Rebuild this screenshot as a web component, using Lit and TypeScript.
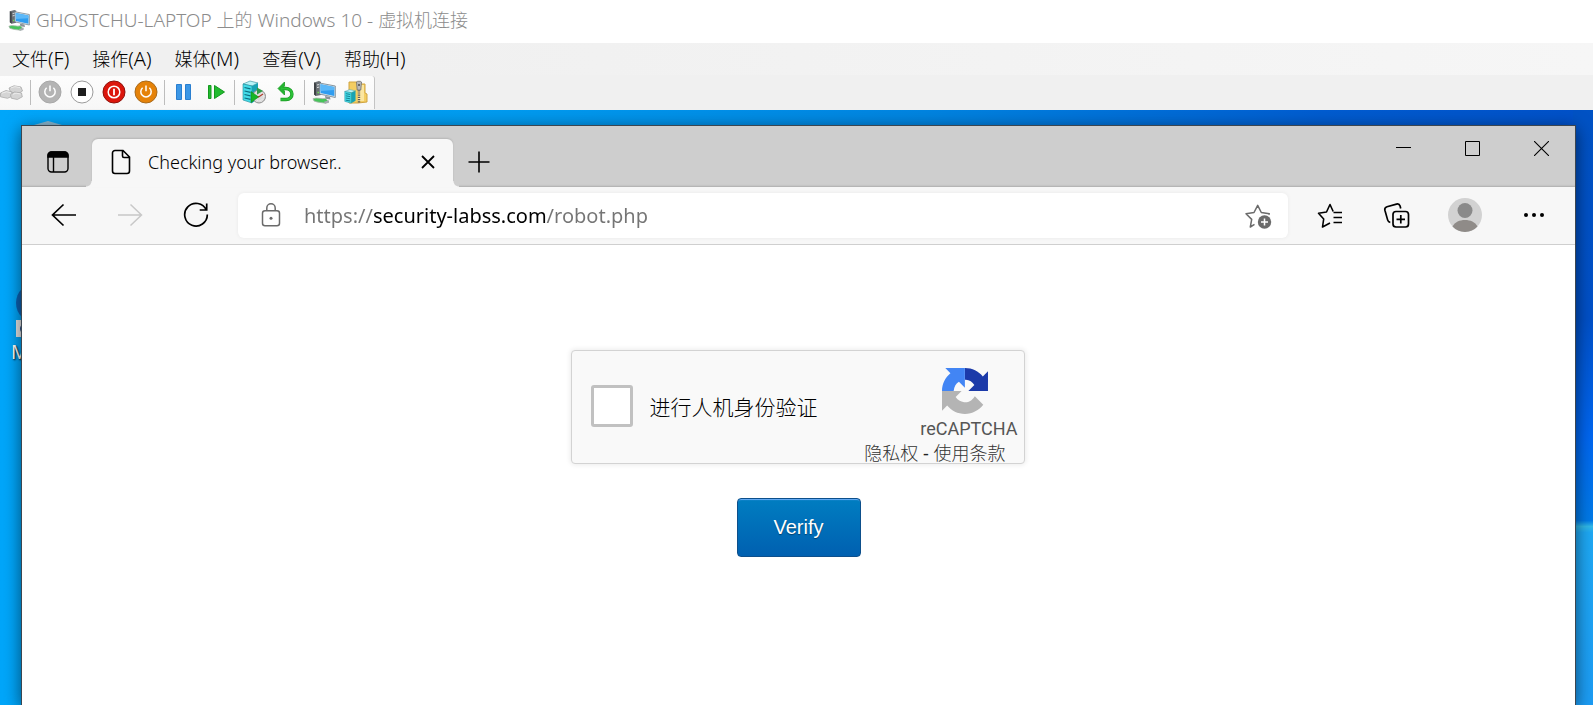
import { LitElement, html, css, svg } from "lit";
import { customElement } from "lit/decorators.js";

const ring = (fill: string, edge: string, glyph: unknown) => html`
  <svg width="24" height="24" viewBox="0 0 24 24" fill="none">
    <circle cx="12" cy="12" r="11" fill=${fill} stroke=${edge} />
    ${glyph}
  </svg>`;

const power = svg`<path d="M8.6 7.8a5.2 5.2 0 1 0 6.8 0M12 5.4v5.8" stroke="#fff" stroke-width="1.5"/>`;

const computer = (size: number) => html`
  <svg width=${size} height=${size} viewBox="0 0 24 24">
    <path d="M2 2.5 7 1l2 1v13l-5 1-2-1.500z" fill="#6b7075" />
    <path d="M2 2.500 4 3.500V16l-2-1.500z" fill="#3f4346" />
    <path d="M5 5l3-.6M5 7.500l3-.6" stroke="#dfe3e6" />
    <path d="M5.500 12.500h1.600" stroke="#6ce04a" stroke-width="1.500" />
    <path d="M7.500 3 23.300 6v11.500L7.500 14z" fill="#dfe6ea" stroke="#6d7f8c" stroke-width=".8" />
    <path d="M8.500 4.300 22.300 7v9L8.500 13z" fill="#2f9df0" />
    <path d="M8.500 4.300 22.300 7v3L8.500 11z" fill="#5cb8f8" />
    <path d="M13 16l5 1 .5 2.500-5-.8z" fill="#8b9298" />
    <path d="M1 18.700c4-1.800 8 .8 12.500-.3l3 3.200-3 1.600C9 22.500 6 22.500 2 21z" fill="#46c45a" stroke="#a9b3ab" stroke-width=".8" />
    <path d="M12 21.800l5-1.500v2.500l-4 1z" fill="#a6acb0" />
  </svg>`;

const server = svg`
  <path d="M1 4 8 1l8 2-6 3z" fill="#b9f3f7" stroke="#2b8c99" stroke-width=".6"/>
  <path d="M1 4l9 2v17l-9-3z" fill="#43dbe8" stroke="#1f8795" stroke-width=".6"/>
  <path d="M10 6l6-3v16l-6 4z" fill="#17a3b4"/>
  <path d="M2.500 7.500l6 1.300M2.500 11l6 1.300M2.500 14.500l6 1.300M2.500 18l6 1.300" stroke="#0c6e80" stroke-width="1.200"/>`;

@customElement("vm-toolbar")
export class VmToolbar extends LitElement {
  static styles = css`
    :host { display: flex; height: 35px; background: #f0f0f0; }
    .strip {
      display: flex; align-items: center; height: 33px; margin-top: 1px; padding-right: 2px;
      background: linear-gradient(#fdfdfd, #f7f7f7);
      border-right: 1px solid #c4c4c4; border-radius: 0 3px 0 0;
    }
    button {
      display: grid; place-items: center; width: 32px; height: 32px;
      padding: 0 0 2px; border: 0; background: none; box-sizing: border-box;
    }
    .first { width: 28px; padding-right: 4px; }
    .sep { width: 1px; height: 25px; margin: 0 3px 0 2px; background: #bdbdbd; }
  `;

  render() {
    return html`
      <div class="strip" role="toolbar" aria-label="工具栏">
        <button class="first" aria-label="Ctrl+Alt+Del">
          <svg width="24" height="24" viewBox="0 0 24 24" fill="#d4d4d4" stroke="#a9a9a9" stroke-width=".8">
            <path d="M9 8l5-2.200 7 1.200 1.500 4-4 2.500-8-1.500z" />
            <path d="M.5 13 6 10.500l6 1.500.5 4-5 2.300-7-1.500z" />
            <path d="M10.500 14.500l4-2.500 7 1 .8 3.800-5 2.700-6-1.300z" />
            <path d="M11 7.800l4-1.200 5 1M2 13.200l4.500-1.500 4.500 1M13 14.300l3-1.200 4.500.9" stroke="#f2f2f2" fill="none" />
          </svg>
        </button>
        <span class="sep"></span>
        <button aria-label="启动">${ring("#b4b4b4", "#a8a8a8", power)}</button>
        <button aria-label="强行关闭">
          ${ring("#fff", "#9b9b9b", svg`<path d="M8 8h8v8H8z" fill="#1e1e1e"/>`)}
        </button>
        <button aria-label="关闭">
          ${ring("#dc160c", "#8e120c", svg`<circle cx="12" cy="12" r="5.800" stroke="#fff" stroke-width="1.500"/><path d="M12 8.800v6.400" stroke="#fff" stroke-width="1.800"/>`)}
        </button>
        <button aria-label="保存">${ring("#e58209", "#a86a1c", power)}</button>
        <span class="sep"></span>
        <button aria-label="暂停">
          <svg width="24" height="24" viewBox="0 0 24 24" fill="#3c97e6" stroke="#2a7fd0">
            <path d="M4.500 4.500h5v15h-5zM13.500 4.500h5v15h-5z" />
          </svg>
        </button>
        <button aria-label="重置">
          <svg width="24" height="24" viewBox="0 0 24 24" fill="#22bb2f" stroke="#14981f">
            <path d="M4.500 5.500h2.500v13H4.500zM10.500 5.500v13L20.500 12z" />
          </svg>
        </button>
        <span class="sep"></span>
        <button aria-label="检查点">
          <svg width="24" height="24" viewBox="0 0 24 24">
            ${server}
            <circle cx="17" cy="16.500" r="6.500" fill="#dcdcdc" stroke="#8d8d8d" />
            <circle cx="17" cy="16.500" r="4.300" fill="none" stroke="#f7f7f7" stroke-dasharray="1 1.500" />
            <path d="M13 17.500l4-.8 4-2.700" fill="none" stroke="#b03a2a" stroke-width="1.200" />
            <path d="M15 7.500v7l6-3.500z" fill="#2f9c46" />
            <path d="M9 11.500v11l7.500-5.500z" fill="#18b625" stroke="#0c8a18" stroke-width=".6" />
          </svg>
        </button>
        <button aria-label="还原">
          <svg width="24" height="24" viewBox="0 0 24 24" fill="none">
            <path d="M7 8.500h4.500C20 8.500 20 19.500 12 19.500H6.500" stroke="#189a22" stroke-width="3.400" />
            <path d="M10.500 2v4L8 8.500l2.500 2.500v4L4 8.500z" fill="#22b52f" stroke="#189a22" stroke-width=".8" />
            <path d="M7 8.500h4.500C20 8.500 20 19.500 12 19.500H7" stroke="#2cc038" stroke-width="2.200" />
          </svg>
        </button>
        <span class="sep"></span>
        <button aria-label="增强会话">${computer(24)}</button>
        <button aria-label="共享">
          <svg width="24" height="24" viewBox="0 0 24 24">
            <path d="M5 2h8l2 2h6v9l2 1v8l-9 1H5z" fill="#f3cd62" stroke="#d0a441" />
            <path d="M14 5h6v16h-6z" fill="#fbe6a0" />
            <path d="M15 8v15" stroke="#5c5c5c" stroke-width="2.400" stroke-dasharray="1.200 1" />
            <path d="M12.500 2c0-1 5-1 5 0l-.7 8h-3.600z" fill="#b9b9b9" stroke="#6f6f6f" stroke-width=".8" />
            <path d="M15 4v2" stroke="#444" stroke-width="1.400" />
            <g transform="translate(0 9) scale(.72 .62)">${server}</g>
          </svg>
        </button>
      </div>`;
  }
}

@customElement("captcha-box")
export class CaptchaBox extends LitElement {
  static styles = css`
    :host {
      display: flex; box-sizing: border-box; width: 454px; height: 114px; max-width: 100%;
      border: 1px solid #d3d3d3; border-radius: 4px; background: #f9f9f9;
      box-shadow: 0 0 5px 1px rgba(0, 0, 0, 0.08);
      font-family: Roboto, "Noto Sans CJK SC", sans-serif; color: #555;
    }
    .check {
      display: flex; align-items: center; flex: 1; gap: 17px;
      padding: 0 0 3px 19px; font-size: 21px; font-weight: 300; color: #000;
    }
    input {
      appearance: none; box-sizing: border-box; width: 42px; height: 42px; margin: 0;
      border: 3px solid #c1c1c1; border-radius: 3px; background: #fff;
    }
    .brand { display: flex; flex-direction: column; align-items: flex-end; padding: 17px 6px 0 0; }
    .logo { flex-shrink: 0; margin-right: 30px; }
    .name { margin-top: 3px; font-size: 18px; line-height: 24px; }
    .links { padding-right: 12px; font-size: 18px; line-height: 24px; font-weight: 300; }
    .dash { font-family: "Noto Sans", sans-serif; font-weight: 400; color: #222; }
    a { color: #333; text-decoration: none; }
  `;

  render() {
    return html`
      <label class="check"><input type="checkbox" />进行人机身份验证</label>
      <div class="brand">
        <svg class="logo" width="46" height="46" viewBox="0 0 64 64" aria-hidden="true">
          <svg x="32" y="0" width="32" height="32" viewBox="32 0 32 32">
            <path fill="#1c3aa9" d="M64 31.955l-.033-1.370V4.687l-7.160 7.160C50.948 4.674 42.033.093 32.050.093c-10.400 0-19.622 4.960-25.458 12.640l11.736 11.860a15.550 15.550 0 0 1 4.754-5.334c2.050-1.600 4.952-2.906 8.968-2.906.485 0 .860.057 1.135.163 4.976.393 9.288 3.140 11.828 7.124l-8.307 8.307L64 31.953" />
          </svg>
          <svg x="0" y="0" width="32" height="32" viewBox="0 0 32 32">
            <path fill="#4285f4" d="M31.862.094l-1.370.033H4.594l7.160 7.160C4.580 13.147 0 22.060 0 32.046c0 10.400 4.960 19.622 12.640 25.458L24.500 45.768a15.550 15.550 0 0 1-5.334-4.754c-1.600-2.050-2.906-4.952-2.906-8.968 0-.485.057-.860.163-1.135.393-4.976 3.140-9.288 7.124-11.828l8.307 8.307L31.860.095" />
          </svg>
          <path fill="#b4b4b4" d="M.001 32.045l.033 1.370v25.898l7.160-7.160c5.860 7.173 14.774 11.754 24.760 11.754 10.400 0 19.622-4.960 25.458-12.640L45.676 39.407a15.550 15.550 0 0 1-4.754 5.334c-2.050 1.600-4.952 2.906-8.968 2.906-.485 0-.860-.057-1.135-.163-4.976-.393-9.288-3.140-11.828-7.124l8.307-8.307-27.300.020" />
        </svg>
        <div class="name">reCAPTCHA</div>
        <div class="links"><a href="#privacy">隐私权</a><span class="dash"> - </span><a href="#terms">使用条款</a></div>
      </div>`;
  }
}

@customElement("browser-window")
export class BrowserWindow extends LitElement {
  static styles = css`
    :host {
      display: flex; flex-direction: column; flex: 1; min-width: 0;
      position: relative; background: #fff;
      border: 1px solid #3c4650; border-bottom: 0;
      box-shadow: 0 4px 16px rgba(0, 0, 0, 0.55);
      font-family: "Noto Sans", "Open Sans", sans-serif;
    }
    button { display: grid; place-items: center; padding: 0; border: 0; background: none; color: #000; }
    svg { display: block; fill: none; stroke: currentColor; }
    .flat { stroke: none; }
    .quiet { color: #6b6b6b; }
    .tabs { display: flex; height: 61px; background: #cecece; box-shadow: inset 0 -2px 2px -1px rgba(0, 0, 0, 0.16); }
    .actions { width: 70px; padding: 10px 0 0 2px; }
    .tab {
      position: relative; display: flex; align-items: center; box-sizing: border-box;
      width: 361px; margin-top: 13px; padding: 0 15px 2px 19px; gap: 17px;
      border-radius: 6px 6px 0 0; background: #f7f7f7; font-size: 18px; font-weight: 300;
      box-shadow: 0 -1px 2px rgba(0, 0, 0, 0.12);
    }
    .tab::before, .tab::after {
      content: ""; position: absolute; bottom: 0; width: 6px; height: 6px;
    }
    .tab::before { right: 100%; background: radial-gradient(circle at 0 0, #cecece 5px, #f7f7f7 6px); }
    .tab::after { left: 100%; background: radial-gradient(circle at 100% 0, #cecece 5px, #f7f7f7 6px); }
    .title { flex: 1; white-space: nowrap; }
    .new { width: 52px; padding-top: 10px; }
    .caption { display: flex; margin-left: auto; }
    .caption button { width: 69px; height: 44px; }
    .caption button:last-child { width: 68px; }
    .bar {
      display: flex; align-items: center; height: 57px; padding: 0 7px 0 9px;
      background: #f7f7f7; border-bottom: 1px solid #cfcfcf;
    }
    .nav, .tool { width: 66px; height: 56px; padding-bottom: 2px; }
    .tool { width: 68px; }
    .off { color: #c8c8c8; }
    .address {
      display: flex; align-items: center; flex: 1; height: 45px; min-width: 0; box-sizing: border-box;
      margin: 0 8px 0 9px; padding: 0 14px 0 20px; border-radius: 6px; background: #fff; color: #6b6b6b;
      box-shadow: 0 0 4px rgba(0, 0, 0, 0.06);
    }
    .url {
      flex: 1; min-width: 0; height: 40px; margin-left: 20px; padding: 0; border: 0; outline: 0;
      font-family: inherit; font-size: 20px; color: transparent;
      background: linear-gradient(90deg, #757575 69px, #000 69px 242px, #757575 242px);
      -webkit-background-clip: text; background-clip: text;
    }
    .page { display: flex; flex-direction: column; align-items: center; flex: 1; padding-top: 105px; gap: 34px; }
    captcha-box { margin-right: 2px; }
    .verify {
      width: 124px; height: 59px; border: 1px solid #0d4f8b; border-radius: 4px;
      background: linear-gradient(#007dc1, #0060b0);
      box-shadow: inset 0 2px 1px -1px rgba(120, 180, 255, 0.9);
      font: 20px "Liberation Sans", sans-serif; color: #fff; text-shadow: 0 1px 1px rgba(0, 0, 0, 0.4);
    }
  `;

  render() {
    return html`
      <div class="tabs">
        <button class="actions" aria-label="Tab actions">
          <svg width="22" height="22" viewBox="0 0 22 22" stroke-width="1.400">
            <rect x="1" y="1" width="20" height="20" rx="3.500" />
            <path d="M1 6V4.500A3.500 3.500 0 0 1 4.500 1h13A3.500 3.500 0 0 1 21 4.500V6z" fill="#000" />
            <path d="M6.500 6v15" />
          </svg>
        </button>
        <div class="tab">
          <svg width="20" height="26" viewBox="0 0 20 26" stroke-width="1.600">
            <path d="M4 1.500h8L18.500 8v14a2.500 2.500 0 0 1-2.500 2.500H4A2.500 2.500 0 0 1 1.500 22V4A2.500 2.500 0 0 1 4 1.500zM11.500 1.500V7A1.500 1.500 0 0 0 13 8.500h5.500" />
          </svg>
          <span class="title">Checking your browser..</span>
          <button aria-label="Close tab">
            <svg width="20" height="20" viewBox="0 0 20 20" stroke-width="1.800"><path d="M4 4l12 12M16 4 4 16" /></svg>
          </button>
        </div>
        <button class="new" aria-label="New tab">
          <svg width="22" height="22" viewBox="0 0 22 22" stroke-width="1.600"><path d="M11 .5v21M.5 11h21" /></svg>
        </button>
        <div class="caption">
          <button aria-label="Minimize"><svg width="15" height="15" viewBox="0 0 15 15"><path d="M0 6.500h15" /></svg></button>
          <button aria-label="Maximize"><svg width="15" height="15" viewBox="0 0 15 15"><path d="M.5.5h14v14H.5z" /></svg></button>
          <button aria-label="Close"><svg width="15" height="15" viewBox="0 0 15 15" stroke-width="1.100"><path d="M0 0l15 15M15 0 0 15" /></svg></button>
        </div>
      </div>
      <div class="bar">
        <button class="nav" aria-label="Back">
          <svg width="26" height="24" viewBox="0 0 26 24" stroke-width="1.700"><path d="M25 12H1.500M12.500 1.500 1.500 12l11 10.500" /></svg>
        </button>
        <button class="nav off" aria-label="Forward" disabled>
          <svg width="26" height="24" viewBox="0 0 26 24" stroke-width="1.500"><path d="M1 12h23.500M13.500 1.500l11 10.500-11 10.500" /></svg>
        </button>
        <button class="nav" aria-label="Refresh">
          <svg width="26" height="26" viewBox="0 0 26 26" stroke-width="1.700">
            <path d="M23.300 8A11.300 11.300 0 1 0 24.300 12.500M23.700 1.500V8h-7" />
          </svg>
        </button>
        <div class="address">
          <svg width="26" height="26" viewBox="0 0 26 26" stroke-width="1.500">
            <rect x="4.500" y="7.800" width="17" height="15" rx="2.500" />
            <path d="M8.800 7.800V5a4.200 4.200 0 0 1 8.400 0v2.800" />
            <circle cx="13" cy="15.300" r="1.500" fill="currentColor" stroke="none" />
          </svg>
          <input class="url" type="text" aria-label="Address" value="https://security-labss.com/robot.php" />
          <button class="quiet" aria-label="Add to favorites">
            <svg width="30" height="30" viewBox="0 0 30 30" stroke-width="1.500">
              <path d="M10.500 23.300 6.300 26l1.400-7.600L2 12.800l8-1.300 3.700-7.200 3.600 7.200 8 1.300-.8 1" stroke-linejoin="round" />
              <circle cx="20.500" cy="21" r="6.700" fill="#6b6b6b" stroke="none" />
              <path d="M20.500 17.500v7M17 21h7" stroke="#fff" />
            </svg>
          </button>
        </div>
        <button class="tool" aria-label="Favorites">
          <svg width="28" height="28" viewBox="0 0 28 28" stroke-width="1.600">
            <path d="M14 22l-7.500 4 1.200-8L2.500 12.300l8-1.300L14 3.500l3.200 7" stroke-linejoin="round" />
            <path d="M17.500 11.500H26M17.500 16.500H26M17.500 21.500H26" />
          </svg>
        </button>
        <button class="tool" aria-label="Collections">
          <svg width="30" height="28" viewBox="0 0 30 28" stroke-width="1.700">
            <rect x="10" y="10.500" width="15.500" height="15.500" rx="3" />
            <path d="M17.800 14v8.500M13.500 18.300H22M7.300 21.300a3 3 0 0 1-2.600-2.200L1.900 9.300A3 3 0 0 1 4 5.700l9.500-2.600a3 3 0 0 1 3.600 2l.6 2.400" />
          </svg>
        </button>
        <button class="tool" aria-label="Profile">
          <svg class="flat" width="36" height="34" viewBox="0 0 36 34">
            <circle cx="17" cy="17" r="17" fill="#d2d2d2" />
            <circle cx="17" cy="12.500" r="7.500" fill="#8a8a8a" />
            <path d="M4.500 28.500C7 24 11.500 22 17 22s10 2 12.500 6.500A17 17 0 0 1 4.500 28.500z" fill="#8f8b88" />
          </svg>
        </button>
        <button class="tool" aria-label="Settings and more">
          <svg class="flat" width="22" height="6" viewBox="0 0 22 6">
            <g fill="#000"><circle cx="3" cy="3" r="2" /><circle cx="11" cy="3" r="2" /><circle cx="19" cy="3" r="2" /></g>
          </svg>
        </button>
      </div>
      <div class="page">
        <captcha-box></captcha-box>
        <button class="verify">Verify</button>
      </div>`;
  }
}

@customElement("app-root")
export class AppRoot extends LitElement {
  static styles = css`
    :host {
      display: flex; flex-direction: column; height: 100vh; overflow: hidden;
      font-family: "Noto Sans", "Noto Sans CJK SC", sans-serif;
    }
    .titlebar {
      display: flex; align-items: center; gap: 6px; height: 43px; padding: 0 8px 4px; box-sizing: border-box;
      background: #fff; color: #8c8c8c; font-size: 19px; font-weight: 300; white-space: nowrap;
    }
    .han { font-size: 18px; }
    .menu { display: flex; align-items: center; height: 32px; padding-left: 12px; gap: 23px; background: linear-gradient(90deg, #f0f0f0 400px, #f6f6f6); }
    .menu button { padding: 0 0 2px; border: 0; background: none; font: 300 20px "Noto Sans", "Noto Sans CJK SC", sans-serif; color: #000; }
    .desktop {
      position: relative; display: flex; flex: 1; padding: 15px 17px 0 21px; overflow: hidden;
      background:
        linear-gradient(#0052c4, #0050c8 35%, #0066f0 55%, #007ae8 69%, #30b8e8 70%, #1ea8f4 71%, #1c9cf4) right / 20px 100% no-repeat,
        linear-gradient(90deg, #00a6fa, #009cf0 30%, #0084e0 58%, #005cd0 83%, #0050c8);
    }
    .shortcut { position: absolute; left: 11px; top: 174px; color: #fff; }
    .shortcut svg { display: block; }
    .caption { font-size: 19px; line-height: 24px; text-shadow: 1px 1px 2px #000; }
    .bin { position: absolute; left: 34px; top: 11px; }
  `;

  render() {
    const items = [["文件", "F"], ["操作", "A"], ["媒体", "M"], ["查看", "V"], ["帮助", "H"]];
    return html`
      <header class="titlebar">
        ${computer(22)}
        <span>GHOSTCHU-LAPTOP <span class="han">上的</span> Windows 10 - <span class="han">虚拟机连接</span></span>
      </header>
      <nav class="menu">
        ${items.map(([name, key]) => html`<button><span class="han">${name}</span>(${key})</button>`)}
      </nav>
      <vm-toolbar></vm-toolbar>
      <main class="desktop">
        <svg class="bin" width="28" height="8" viewBox="0 0 28 8"><path d="M0 4 14 0l14 4-14 4z" fill="#8ab6cf" /></svg>
        <div class="shortcut">
          <svg width="12" height="56" viewBox="0 0 12 56">
            <circle cx="25" cy="19" r="20" fill="#0c62b4" />
            <path d="M5 36h7v17H5z" fill="#e6e6e6" />
            <path d="M12 40c-4 2-4 7 0 10z" fill="#25508c" />
          </svg>
          <div class="caption">M</div>
        </div>
        <browser-window></browser-window>
      </main>`;
  }
}
